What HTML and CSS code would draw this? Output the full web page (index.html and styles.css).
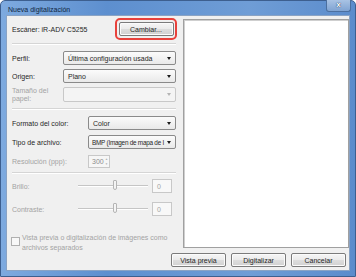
FILE: index.html
```html
<!DOCTYPE html>
<html lang="es">
<head>
    <meta charset="UTF-8">
    <title>Nueva digitalización</title>
    <link rel="stylesheet" href="styles.css">
</head>
<body>
    <div class="window">
        <div class="titlebar">
            <span class="title">Nueva digitalización</span>
            <span class="close">x</span>
        </div>
        <div class="client">
            <div class="main">
                <div class="left">
                    <div class="row scanner-row">
                        <span>Escáner: iR-ADV C5255</span>
                        <span class="btn change">Cambiar...</span>
                        <span class="highlight"></span>
                    </div>
                    <div class="sep first"></div>
                    <div class="row profile">
                        <label class="lbl">Perfil:</label>
                        <span class="combo">Última configuración usada</span>
                    </div>
                    <div class="row origin">
                        <label class="lbl">Origen:</label>
                        <span class="combo">Plano</span>
                    </div>
                    <div class="row paper disabled">
                        <label class="lbl two">Tamaño del<br>papel:</label>
                        <span class="combo"></span>
                    </div>
                    <div class="sep second"></div>
                    <div class="row wide color-fmt">
                        <label class="lbl">Formato del color:</label>
                        <span class="combo">Color</span>
                    </div>
                    <div class="row wide file-type">
                        <label class="lbl">Tipo de archivo:</label>
                        <span class="combo">BMP (Imagen de mapa de I</span>
                    </div>
                    <div class="row wide res disabled">
                        <label class="lbl">Resolución (ppp):</label>
                        <span class="spin">300<span class="arrows"><i>▲</i><i>▼</i></span></span>
                    </div>
                    <div class="sep third"></div>
                    <div class="row slider-row bright disabled">
                        <label class="lbl">Brillo:</label>
                        <span class="track"><span class="thumb"></span></span>
                        <span class="num">0</span>
                    </div>
                    <div class="row slider-row contrast disabled">
                        <label class="lbl">Contraste:</label>
                        <span class="track"><span class="thumb"></span></span>
                        <span class="num">0</span>
                    </div>
                    <div class="check-row disabled">
                        <span class="box"></span>
                        <span>Vista previa o digitalización de imágenes como<br>archivos separados</span>
                    </div>
                </div>
                <div class="preview"></div>
            </div>
            <div class="footer">
                <span class="btn">Vista previa</span>
                <span class="btn">Digitalizar</span>
                <span class="btn">Cancelar</span>
            </div>
        </div>
    </div>
</body>
</html>
```

FILE: styles.css
```css
body {
    margin: 0;
    font-family: "Liberation Sans", Arial, sans-serif;
    font-size: 7px;
    color: #262626;
}
.window {
    width: 356px;
    height: 277px;
    box-sizing: border-box;
    padding: 0 5px 6px 5px;
    background: linear-gradient(90deg, #7eaadf 0%, #5d8fcf 30%, #6f9dd6 70%, #5b8ccc 100%);
    border: 1px solid #3d5f8f;
    border-radius: 5px 5px 0 0;
}
.titlebar {
    height: 14px;
    display: flex;
    align-items: center;
    position: relative;
}
.title {
    padding-left: 2px;
    padding-top: 2px;
    color: #0f2540;
    font-size: 7px;
}
.close {
    position: absolute;
    right: -1px;
    top: -1px;
    width: 25px;
    height: 12px;
    box-sizing: border-box;
    border: 1px solid #4b6f9f;
    border-top: none;
    border-radius: 0 0 3px 3px;
    background: linear-gradient(180deg, #a9c3e4, #7fa3d2);
    color: #fff;
    font-weight: bold;
    font-size: 8px;
    line-height: 10px;
    text-align: center;
    text-shadow: 0 0 1px #203c60, 0 0 1px #203c60;
}
.client {
    height: 256px;
    box-sizing: border-box;
    background: #f0f0f0;
    border: 1px solid #8aa3c4;
}
.main {
    display: flex;
    height: 235px;
}
.left {
    width: 164px;
    padding-left: 5px;
    margin-right: 7px;
    white-space: nowrap;
}
.row {
    display: flex;
    align-items: center;
    height: 14px;
    position: relative;
}
.scanner-row {
    margin-top: 6px;
}
.highlight {
    position: absolute;
    left: 103px;
    top: -4px;
    width: 62px;
    height: 22px;
    box-sizing: border-box;
    border: 2px solid #e8413b;
    border-radius: 5px;
}
.btn {
    display: inline-flex;
    align-items: center;
    justify-content: center;
    box-sizing: border-box;
    height: 14px;
    border: 1px solid #7b7b7b;
    border-radius: 2px;
    background: linear-gradient(180deg, #f6f6f6 0%, #ebebeb 48%, #dddddd 52%, #d1d1d1 100%);
    box-shadow: inset 0 0 0 1px #fbfbfb;
}
.change {
    margin-left: auto;
    margin-right: 2px;
    width: 55px;
}
.sep {
    height: 1px;
    background: #d5d5d5;
    border-bottom: 1px solid #fff;
}
.first {
    margin-top: 7px;
}
.second {
    margin-top: 6px;
}
.third {
    margin-top: 4px;
}
.lbl {
    width: 51px;
    flex: none;
}
.wide .lbl {
    width: 76px;
}
.combo {
    flex: 1;
    min-width: 0;
    height: 14px;
    box-sizing: border-box;
    border: 1px solid #8a8a8a;
    border-radius: 2px;
    background: linear-gradient(180deg, #fbfbfb, #e9e9e9);
    padding: 0 10px 0 4px;
    display: flex;
    align-items: center;
    position: relative;
    overflow: hidden;
}
.combo::after {
    content: "";
    position: absolute;
    right: 4px;
    top: 5px;
    border-left: 2px solid transparent;
    border-right: 2px solid transparent;
    border-top: 3px solid #1c1c1c;
}
.file-type .combo {
    padding: 0 8px 0 3px;
    font-size: 6.4px;
    letter-spacing: -0.25px;
}
.profile {
    margin-top: 6px;
}
.origin {
    margin-top: 4px;
}
.paper {
    margin-top: 4px;
    height: 15px;
}
.paper .combo {
    height: 15px;
}
.disabled {
    color: #a3a3a3;
}
.disabled .combo {
    background: #f4f4f4;
    border-color: #c8c8c8;
}
.disabled .combo::after {
    border-top-color: #b4b4b4;
}
.two {
    line-height: 8px;
}
.color-fmt {
    margin-top: 6px;
}
.file-type {
    margin-top: 5px;
}
.res {
    margin-top: 6px;
    height: 13px;
}
.spin {
    width: 22px;
    height: 13px;
    box-sizing: border-box;
    border: 1px solid #c8c8c8;
    background: #f6f6f6;
    display: flex;
    align-items: center;
    padding-left: 3px;
    color: #8c8c8c;
}
.arrows {
    margin-left: auto;
    display: flex;
    flex-direction: column;
    font-size: 3px;
    line-height: 5px;
    padding-right: 1px;
    color: #b0b0b0;
}
.arrows i {
    font-style: normal;
}
.slider-row .lbl {
    width: 66px;
}
.track {
    width: 70px;
    height: 1px;
    background: #c5c5c5;
    border-bottom: 1px solid #fff;
    position: relative;
}
.thumb {
    position: absolute;
    left: 35px;
    top: -5px;
    width: 4px;
    height: 10px;
    box-sizing: border-box;
    border: 1px solid #b5b5b5;
    border-radius: 1px 1px 2px 2px;
    background: #f4f4f4;
}
.num {
    margin-left: 4px;
    width: 20px;
    height: 14px;
    box-sizing: border-box;
    border: 1px solid #c8c8c8;
    background: #f8f8f8;
    padding-left: 4px;
    display: flex;
    align-items: center;
}
.bright {
    margin-top: 5px;
}
.contrast {
    margin-top: 9px;
}
.check-row {
    margin-top: 17px;
    margin-left: -1px;
    display: flex;
    align-items: flex-start;
    gap: 2px;
    line-height: 10px;
}
.box {
    width: 9px;
    height: 9px;
    margin-top: 4px;
    box-sizing: border-box;
    border: 1px solid #b0b0b0;
    background: #f8f8f8;
}
.preview {
    margin-top: 3px;
    width: 167px;
    height: 229px;
    box-sizing: border-box;
    background: #fff;
    border: 1px solid #a0a0a0;
    box-shadow: inset 1px 1px 0 #cfcfcf;
}
.footer {
    display: flex;
    justify-content: flex-end;
    gap: 5px;
    padding-right: 3px;
    margin-top: 2px;
}
.footer .btn {
    width: 55px;
}
```
